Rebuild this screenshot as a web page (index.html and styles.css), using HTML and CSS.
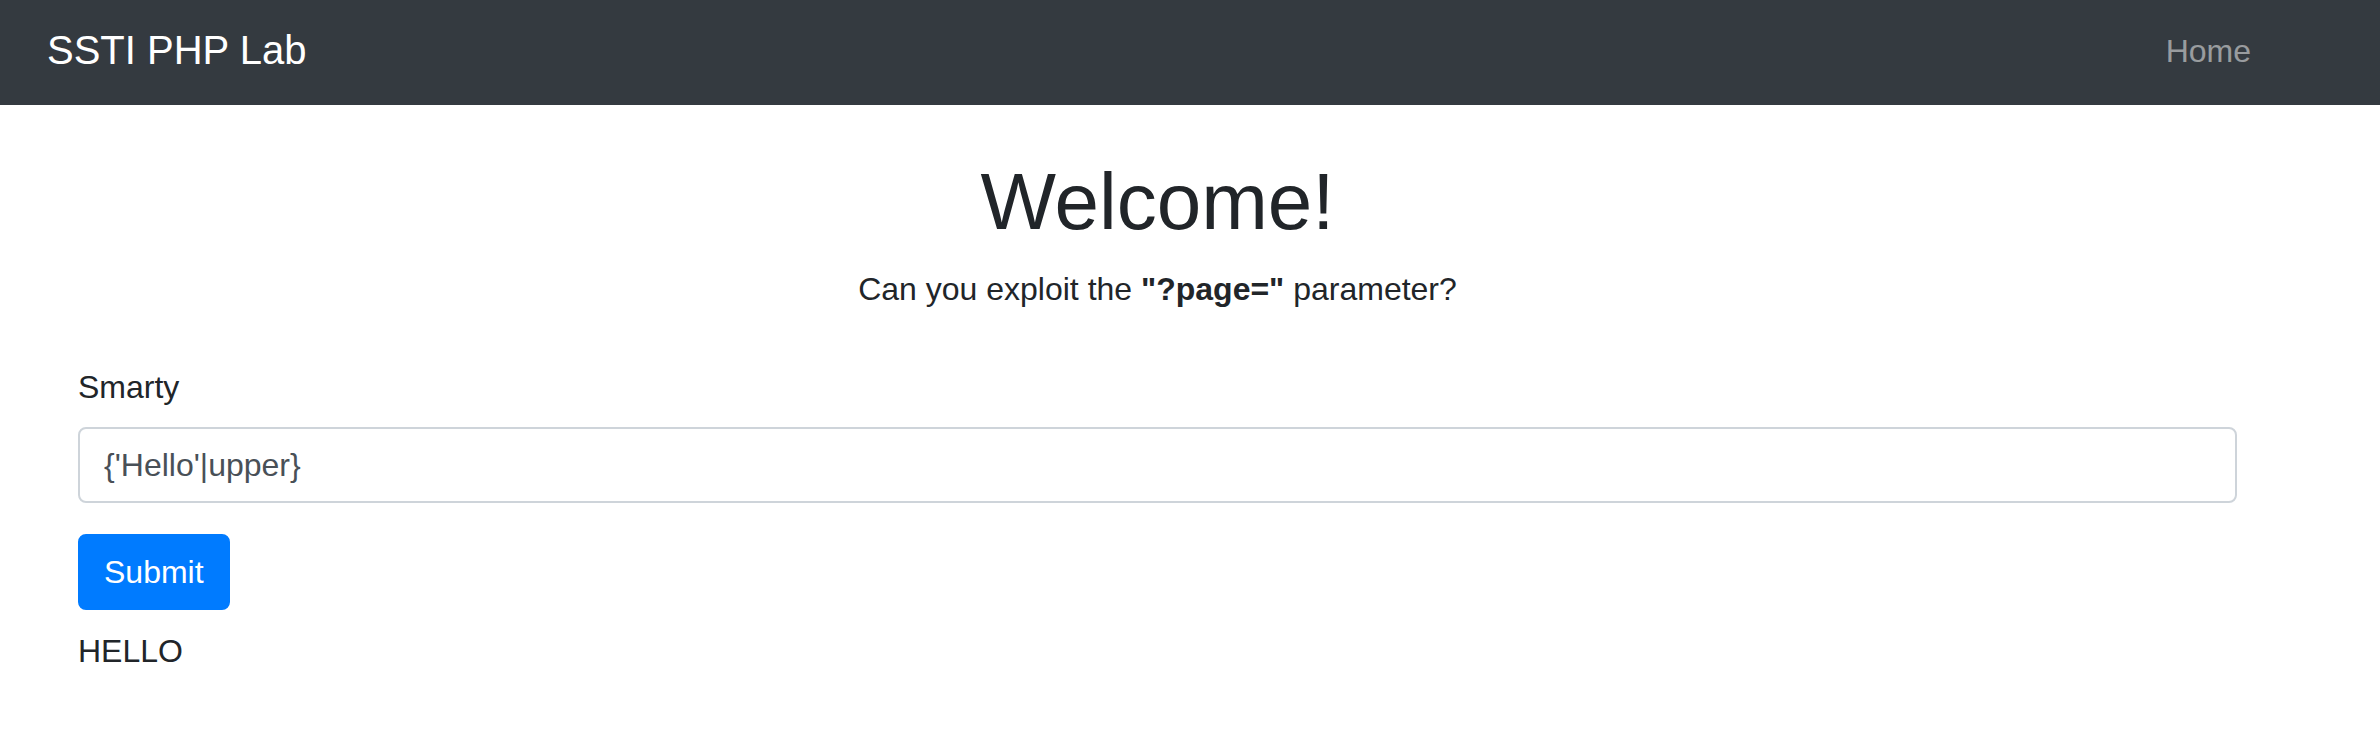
FILE: index.html
```html
<!DOCTYPE html>
<html lang="en">
<head>
<meta charset="utf-8">
<title>SSTI PHP Lab</title>
<link rel="stylesheet" href="styles.css">
</head>
<body>
<nav class="navbar">
  <a class="brand" href="#">SSTI PHP Lab</a>
  <ul class="nav">
    <li><a class="nav-link" href="#">Home</a></li>
  </ul>
</nav>
<main class="container">
  <h1 class="title">Welcome!</h1>
  <p class="lead">Can you exploit the <strong>"?page="</strong> parameter?</p>
  <form class="form">
    <div class="form-group">
      <label class="label" for="tpl">Smarty</label>
      <input class="form-control" id="tpl" type="text" value="{'Hello'|upper}">
    </div>
    <button class="btn" type="button">Submit</button>
  </form>
  <div class="result">HELLO</div>
</main>
</body>
</html>
```
FILE: styles.css
```css
* { box-sizing: border-box; }
html, body { margin: 0; padding: 0; }
body {
  font-family: "Liberation Sans", Arial, sans-serif;
  font-size: 32px;
  line-height: 48px;
  color: #212529;
  background: #fff;
}
.navbar {
  display: flex;
  align-items: flex-start;
  height: 105px;
  padding: 20px 129px 0 47px;
  background: #343a40;
}
.brand {
  font-size: 40px;
  line-height: 60px;
  color: #fff;
  text-decoration: none;
}
.nav {
  list-style: none;
  margin: 7px 0 0 auto;
  padding: 0;
  display: flex;
}
.nav-link {
  color: rgba(255, 255, 255, 0.5);
  text-decoration: none;
  font-size: 32px;
  line-height: 48px;
}
.container {
  margin-left: 78px;
  width: 2159px;
}
.title {
  margin: 49px 0 15px;
  font-size: 80px;
  line-height: 96px;
  font-weight: 400;
  text-align: center;
  color: #212529;
}
.lead {
  margin: 0 0 50px;
  text-align: center;
}
.lead strong { font-weight: 700; }
.form { margin: 0; }
.form-group { margin-bottom: 31px; }
.label {
  display: block;
  margin-bottom: 16px;
}
.form-control {
  display: block;
  width: 100%;
  height: 76px;
  padding: 0 24px;
  font-family: inherit;
  font-size: 32px;
  color: #495057;
  background: #fff;
  border: 2px solid #ced4da;
  border-radius: 8px;
  outline: none;
}
.btn {
  display: block;
  height: 76px;
  padding: 0 24px;
  font-family: inherit;
  font-size: 32px;
  line-height: 48px;
  color: #fff;
  background: #007bff;
  border: 2px solid #007bff;
  border-radius: 8px;
}
.result {
  margin-top: 17px;
}
```
